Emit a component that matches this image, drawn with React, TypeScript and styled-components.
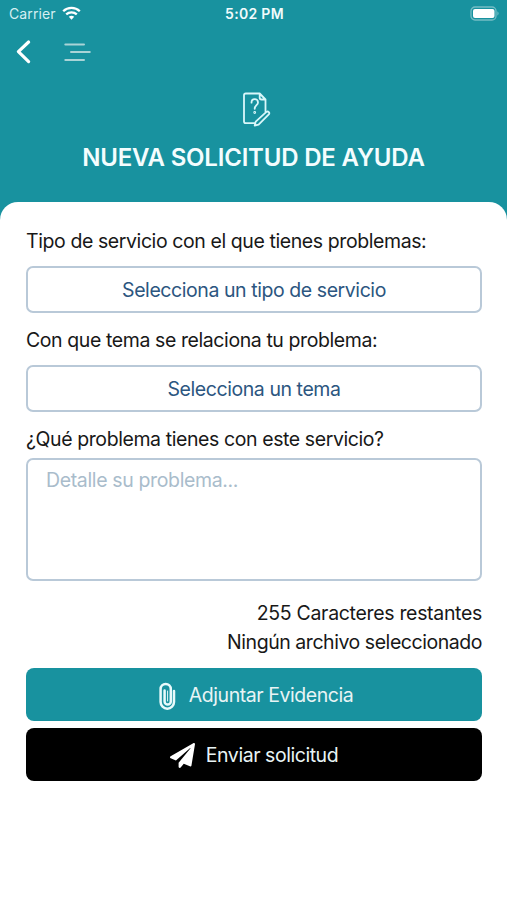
import React from "react";
import styled, { createGlobalStyle } from "styled-components";
import { FaPaperPlane } from "react-icons/fa";

const GlobalStyle = createGlobalStyle`
  * { box-sizing: border-box; }
  body { margin: 0; background: #fff; font-family: Inter, "Liberation Sans", sans-serif; }
`;

const Screen = styled.div`
  width: 507px;
  height: 900px;
  overflow: hidden;
  background: #18929f;
  display: flex;
  flex-direction: column;
`;

const StatusBar = styled.div`
  height: 28px;
  flex: none;
  display: grid;
  grid-template-columns: 1fr auto 1fr;
  align-items: center;
  padding: 0 7px 2px 9px;
  color: #f2fbfc;
  font-size: 14px;
  line-height: 26px;
`;

const Carrier = styled.div`
  display: flex;
  align-items: center;
  gap: 6px;
  color: #d5eff2;
  letter-spacing: 0.1px;
`;

const Clock = styled.div`
  padding-top: 1px;
  font-weight: 600;
  font-size: 14px;
  letter-spacing: 0.3px;
`;

const BatterySlot = styled.div`
  display: flex;
  justify-content: flex-end;
`;

const NavBar = styled.nav`
  height: 50px;
  flex: none;
  display: flex;
  align-items: center;
  gap: 31px;
  padding: 0 0 2px 15px;
`;

const IconButton = styled.button`
  display: flex;
  padding: 0;
  border: 0;
  background: none;
`;

const Heading = styled.header`
  height: 124px;
  flex: none;
  display: flex;
  flex-direction: column;
  align-items: center;
  padding-top: 13px;
`;

const Title = styled.h1`
  margin: 16px 0 0;
  color: #f4fdfe;
  font-size: 24px;
  line-height: 30px;
  font-weight: 600;
  letter-spacing: -0.2px;
  white-space: nowrap;
`;

const Card = styled.main`
  flex: 1;
  display: flex;
  flex-direction: column;
  background: #fff;
  border-radius: 18px 18px 0 0;
  padding: 27px 25px 0 26px;
`;

const Label = styled.label`
  height: 24px;
  line-height: 24px;
  font-size: 19.5px;
  color: #181818;
  letter-spacing: -0.41px;
  white-space: nowrap;
`;

const SelectButton = styled.button`
  height: 47px;
  flex: none;
  margin: 13px 0 15px;
  padding: 1px 0 0;
  border: 2px solid #b9c9d8;
  border-radius: 7px;
  background: #fff;
  color: #2c5680;
  font: 19.5px/24px Inter, sans-serif;
  letter-spacing: -0.43px;
`;

const Details = styled.textarea`
  height: 123px;
  flex: none;
  margin: 7px 0 0;
  padding: 8px 18px;
  resize: none;
  border: 2px solid #b9c9d8;
  border-radius: 7px;
  background: #fff;
  font: 19.5px/24px Inter, sans-serif;
  letter-spacing: -0.36px;
  &::placeholder { color: #a9bccb; opacity: 1; }
`;

const Notes = styled.div`
  margin: 18px 0 12px;
  display: flex;
  flex-direction: column;
  align-items: flex-end;
`;

const Note = styled.span<{ $spacing: number }>`
  font-size: 19.5px;
  line-height: 28.5px;
  color: #181818;
  letter-spacing: ${(p) => p.$spacing}px;
`;

const Action = styled.button<{ $color: string; $gap: number; $inset?: number }>`
  height: 53px;
  flex: none;
  display: flex;
  align-items: center;
  justify-content: center;
  gap: ${(p) => p.$gap}px;
  margin: 0 0 7px;
  padding: 1px 0 0 ${(p) => p.$inset ?? 0}px;
  border: 0;
  border-radius: 8px;
  background: ${(p) => p.$color};
  color: #e8f4f5;
  font: 19.5px/24px Inter, sans-serif;
  letter-spacing: -0.45px;
`;

const WifiIcon = () => (
  <svg width="19" height="15" viewBox="0 0 19 15" fill="none" stroke="#fff" strokeWidth="2.3">
    <path d="M1.2 5.2C5.8 .7 13.2 .7 17.8 5.2" />
    <path d="M4.2 8.4C7.2 5.6 11.8 5.6 14.8 8.4" />
    <path d="M6.8 10.7Q9.5 8.6 12.2 10.7L9.5 13.7Z" fill="#fff" stroke="none" />
  </svg>
);

const BatteryIcon = () => (
  <svg width="30" height="15" viewBox="0 0 30 15">
    <rect x="1" y="1" width="25" height="13" rx="4" fill="none" stroke="#74bdc5" strokeWidth="1.3" />
    <rect x="3" y="3" width="21.5" height="9" rx="2" fill="#fff" />
    <path d="M27.5 5.3Q29.5 7.5 27.5 9.7Z" fill="#8bcbd1" />
  </svg>
);

const BackIcon = () => (
  <svg width="17" height="26" viewBox="0 0 17 26" fill="none" stroke="#fff" strokeWidth="3.2" strokeLinecap="round" strokeLinejoin="round">
    <path d="M13.6 3 3.4 12.7 13.6 22.6" />
  </svg>
);

const MenuIcon = () => (
  <svg width="29" height="22" viewBox="0 0 29 22" stroke="#a9d4d7" strokeWidth="2" strokeLinecap="round">
    <path d="M2.3 3.5H21M8 11.1h18.8M2.3 18.9H21" />
  </svg>
);

const RequestIcon = () => (
  <svg width="36" height="36" viewBox="-5.5 0 36 36" fill="none" stroke="#d9f7fa" strokeWidth="1.8" strokeLinecap="round" strokeLinejoin="round">
    <path d="M13.5 32.2H4.2Q2.5 32.2 2.5 30.5V4.2Q2.5 2.5 4.2 2.5H18.2L24 8.5V20.5M18.2 2.5V6.8Q18.2 8.5 20 8.5H24" />
    <path d="M10 11.7C10 6.9 16.5 7.2 16.5 11.4C16.5 14.2 13.2 14.3 13.2 17.8" />
    <circle cx="13.2" cy="21.5" r=".5" />
    <path d="M14.2 30.6 24.9 20.9Q26.2 20 27.3 21.1Q28.3 22.2 27.3 23.4L17.1 33.7 13.2 34.5Z" />
  </svg>
);

const ClipIcon = () => (
  <svg width="17" height="29" viewBox="0 -1 17 29" fill="none" stroke="#e8fafb" strokeWidth="2.5" strokeLinecap="round">
    <path d="M15 9V20A6.7 6.7 0 0 1 1.6 20V7A5.1 5.1 0 0 1 11.8 7V19.4A3.1 3.1 0 0 1 5.6 19.4V8.4" />
    <path d="M8.6 9V19" strokeWidth="1" />
  </svg>
);

export default function App() {
  return (
    <Screen>
      <GlobalStyle />
      <StatusBar>
        <Carrier>Carrier <WifiIcon /></Carrier>
        <Clock>5:02 PM</Clock>
        <BatterySlot><BatteryIcon /></BatterySlot>
      </StatusBar>
      <NavBar>
        <IconButton aria-label="Volver"><BackIcon /></IconButton>
        <IconButton aria-label="Menú"><MenuIcon /></IconButton>
      </NavBar>
      <Heading>
        <RequestIcon />
        <Title>NUEVA SOLICITUD DE AYUDA</Title>
      </Heading>
      <Card>
        <Label>Tipo de servicio con el que tienes problemas:</Label>
        <SelectButton>Selecciona un tipo de servicio</SelectButton>
        <Label>Con que tema se relaciona tu problema:</Label>
        <SelectButton>Selecciona un tema</SelectButton>
        <Label>¿Qué problema tienes con este servicio?</Label>
        <Details placeholder="Detalle su problema..." />
        <Notes>
          <Note $spacing={-0.32}>255 Caracteres restantes</Note>
          <Note $spacing={-0.45}>Ningún archivo seleccionado</Note>
        </Notes>
        <Action $color="#18929f" $gap={13} $inset={4}><ClipIcon />Adjuntar Evidencia</Action>
        <Action $color="#000" $gap={11}><FaPaperPlane size={25} color="#fff" />Enviar solicitud</Action>
      </Card>
    </Screen>
  );
}
